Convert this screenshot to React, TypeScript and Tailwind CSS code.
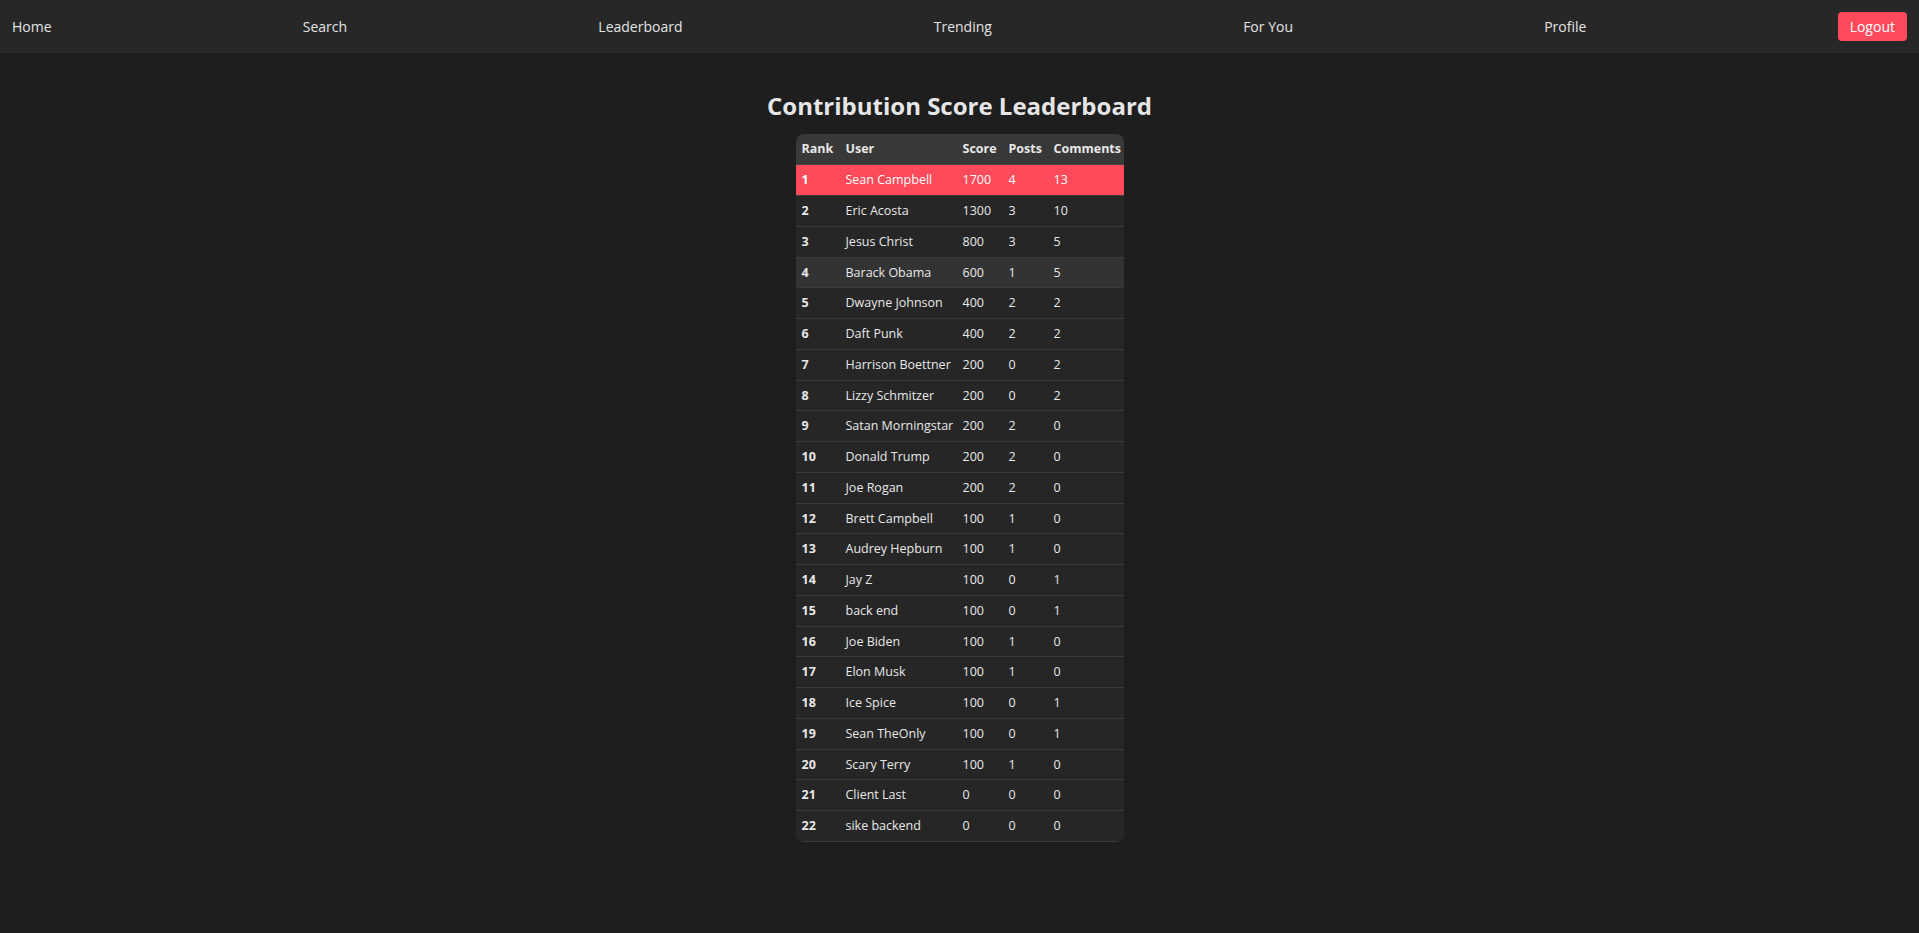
import React from "react";

const navLinks = ["Home", "Search", "Leaderboard", "Trending", "For You", "Profile"];

const users = [
  { name: "Sean Campbell", score: 1700, posts: 4, comments: 13 },
  { name: "Eric Acosta", score: 1300, posts: 3, comments: 10 },
  { name: "Jesus Christ", score: 800, posts: 3, comments: 5 },
  { name: "Barack Obama", score: 600, posts: 1, comments: 5 },
  { name: "Dwayne Johnson", score: 400, posts: 2, comments: 2 },
  { name: "Daft Punk", score: 400, posts: 2, comments: 2 },
  { name: "Harrison Boettner", score: 200, posts: 0, comments: 2 },
  { name: "Lizzy Schmitzer", score: 200, posts: 0, comments: 2 },
  { name: "Satan Morningstar", score: 200, posts: 2, comments: 0 },
  { name: "Donald Trump", score: 200, posts: 2, comments: 0 },
  { name: "Joe Rogan", score: 200, posts: 2, comments: 0 },
  { name: "Brett Campbell", score: 100, posts: 1, comments: 0 },
  { name: "Audrey Hepburn", score: 100, posts: 1, comments: 0 },
  { name: "Jay Z", score: 100, posts: 0, comments: 1 },
  { name: "back end", score: 100, posts: 0, comments: 1 },
  { name: "Joe Biden", score: 100, posts: 1, comments: 0 },
  { name: "Elon Musk", score: 100, posts: 1, comments: 0 },
  { name: "Ice Spice", score: 100, posts: 0, comments: 1 },
  { name: "Sean TheOnly", score: 100, posts: 0, comments: 1 },
  { name: "Scary Terry", score: 100, posts: 1, comments: 0 },
  { name: "Client Last", score: 0, posts: 0, comments: 0 },
  { name: "sike backend", score: 0, posts: 0, comments: 0 },
];

const App: React.FC = () => {
  return (
    <div className="min-h-screen bg-[#1e1e1e] font-['Open_Sans',sans-serif] text-[#e8e8e8]">
      {/* Top nav */}
      <nav className="h-[53px] bg-[#272727] px-3 flex items-center justify-between">
        {navLinks.map((link) => (
          <a key={link} href="#" className="text-[14px] text-[#e3e3e3]">
            {link}
          </a>
        ))}
        <button className="h-[29px] px-3 rounded bg-[#ff4a5c] text-white text-[14px]">Logout</button>
      </nav>

      <main className="flex flex-col items-center">
        <h1 className="mt-[37px] mb-[12px] text-[24px] leading-[32px] font-bold text-[#e6e6e6]">
          Contribution Score Leaderboard
        </h1>

        <div className="w-[328px] rounded-lg overflow-hidden bg-[#262626]">
          <table className="w-full table-fixed border-collapse text-[12.5px]">
            <colgroup>
              <col className="w-[44px]" />
              <col className="w-[117px]" />
              <col className="w-[46px]" />
              <col className="w-[45px]" />
              <col className="w-[76px]" />
            </colgroup>
            <thead>
              <tr className="h-[30.75px] bg-[#383838] border-b border-[#444]">
                <th className="px-1.5 pt-px text-left font-bold">Rank</th>
                <th className="px-1.5 pt-px text-left font-bold">User</th>
                <th className="px-1.5 pt-px text-left font-bold">Score</th>
                <th className="px-1.5 pt-px text-left font-bold">Posts</th>
                <th className="px-1.5 pt-px text-left font-bold whitespace-nowrap">Comments</th>
              </tr>
            </thead>
            <tbody>
              {users.map((u, i) => (
                <tr
                  key={u.name}
                  className={
                    i === 0
                      ? "h-[30.75px] bg-[#ff4a5a] text-white border-b border-[#3a3a3a]"
                      : i === 3
                      ? "h-[30.75px] bg-[#333333] border-b border-[#3a3a3a]"
                      : "h-[30.75px] bg-[#262626] border-b border-[#3a3a3a]"
                  }
                >
                  <td className="px-1.5 pt-px font-bold whitespace-nowrap">{i + 1}</td>
                  <td className="px-1.5 pt-px whitespace-nowrap">{u.name}</td>
                  <td className="px-1.5 pt-px">{u.score}</td>
                  <td className="px-1.5 pt-px">{u.posts}</td>
                  <td className="px-1.5 pt-px">{u.comments}</td>
                </tr>
              ))}
            </tbody>
          </table>
        </div>
      </main>
    </div>
  );
};

export default App;
